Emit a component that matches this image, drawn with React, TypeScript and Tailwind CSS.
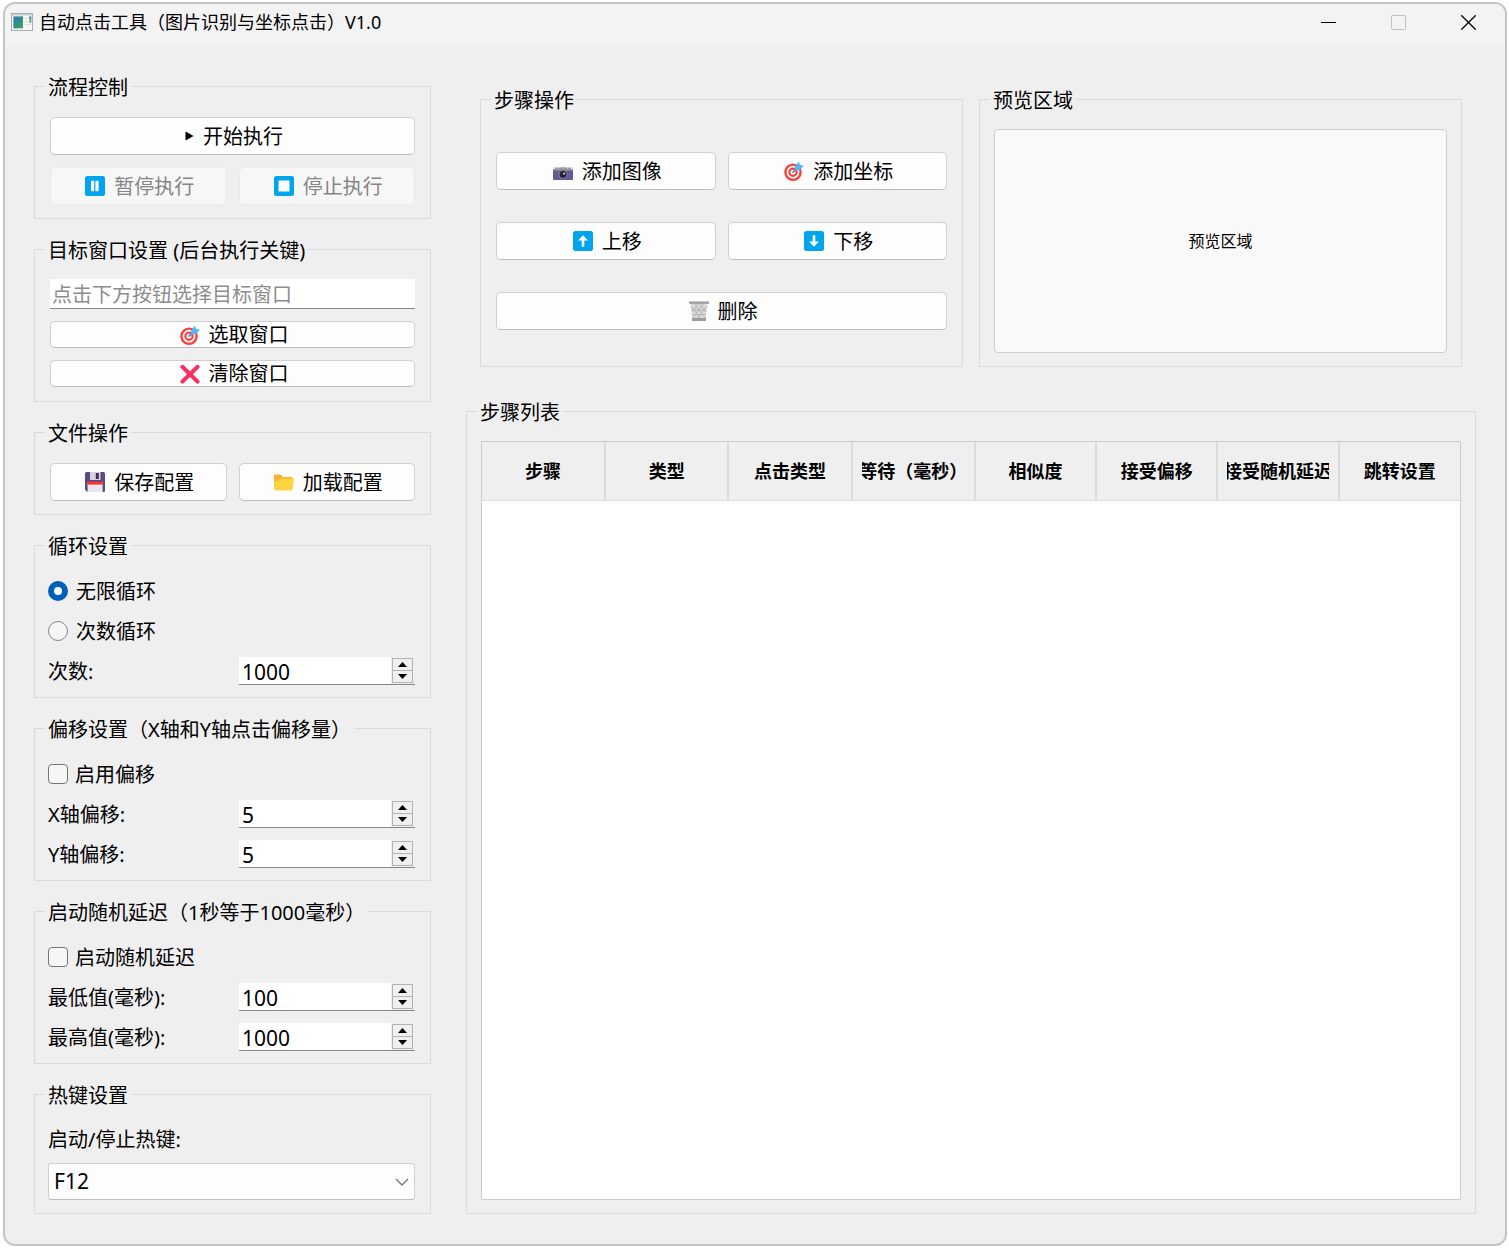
import { useState } from "react";
import type { ReactNode } from "react";
import clsx from "clsx";

const Keycap = ({ children }: { children: ReactNode }) => (
  <svg viewBox="0 0 20 20" className="size-5 shrink-0" aria-hidden="true">
    <rect x="0" y="0" width="20" height="20" rx="2.5" fill="#00a6ed" />
    {children}
  </svg>
);

const PauseIcon = () => (
  <Keycap>
    <rect x="6" y="4.8" width="3.2" height="10.4" fill="#fff" />
    <rect x="10.4" y="4.8" width="3.2" height="10.4" fill="#fff" />
  </Keycap>
);

const StopIcon = () => (
  <Keycap>
    <rect x="4.5" y="4.5" width="11" height="11" rx="0.5" fill="#fff" />
  </Keycap>
);

const UpIcon = () => (
  <Keycap>
    <path d="M10 4.2 15 9.6h-3.7v6.2H8.7V9.6H5z" fill="#fff" />
  </Keycap>
);

const DownIcon = () => (
  <Keycap>
    <path d="M10 15.8 5 10.4h3.7V4.2h2.6v6.2H15z" fill="#fff" />
  </Keycap>
);

const PlayIcon = () => (
  <svg viewBox="0 0 9 10" className="h-[10px] w-[9px] shrink-0" aria-hidden="true">
    <path d="M0.5 0.5 8.5 5 0.5 9.5z" fill="#000" />
  </svg>
);

const TargetIcon = () => (
  <svg viewBox="0 0 20 20" className="size-5 shrink-0" aria-hidden="true">
    <circle cx="9" cy="11.2" r="7.6" fill="#fff" stroke="#f8403c" strokeWidth="2.4" />
    <circle cx="9" cy="11.2" r="3.6" fill="#fff" stroke="#f8403c" strokeWidth="2.2" />
    <path d="M8.6 11.6 14 6.2" stroke="#4a86c8" strokeWidth="1.6" />
    <path d="M11 5.4 15 0.4l.9 3.4 4 1-4.6 4.4-4.3.2z" fill="#50b8fa" />
  </svg>
);

const CrossIcon = () => (
  <svg viewBox="0 0 20 20" className="size-5 shrink-0" aria-hidden="true">
    <path d="M2.4 2.8 17.6 17.6M17.6 2.8 2.4 17.6" stroke="#f92f60" strokeWidth="4" strokeLinecap="round" />
  </svg>
);

const SaveIcon = () => (
  <svg viewBox="0 0 20 20" className="size-5 shrink-0" aria-hidden="true">
    <path d="M0 1.5Q0 0 1.5 0h17Q20 0 20 1.5v17q0 1.5-1.5 1.5h-16L0 17.8z" fill="#5b4a80" />
    <rect x="5" y="0" width="10.5" height="8" fill="#d8d3df" />
    <rect x="10.8" y="1" width="3" height="6" fill="#3c2f5c" />
    <rect x="2.6" y="10" width="15" height="10" fill="#e9e6ec" />
    <rect x="2.6" y="9.6" width="15" height="3" fill="#f8312f" />
  </svg>
);

const FolderIcon = () => (
  <svg viewBox="0 0 20 20" className="size-5 shrink-0" aria-hidden="true">
    <path d="M0 3.6Q0 2.4 1.2 2.4h5.4L9 5h8.2q1.2 0 1.2 1.2V15H0z" fill="#ffb02e" />
    <path d="M0 9.6Q3 9.4 4.6 7.6 5.4 6.6 6.8 6.6h12q1.4 0 1.1 1.4l-1.3 9.2q-.3 1.4-1.6 1.4H2.4Q.6 18.6.4 16.8z" fill="#fcd53f" />
  </svg>
);

const CameraIcon = () => (
  <svg viewBox="0 0 20 20" className="size-5 shrink-0" aria-hidden="true">
    <path d="M1.6 6.6h4v2h-4zM14.4 6.6h4v2h-4z" fill="#9b9b9b" />
    <path d="M6.4 6.2h7.2l.8 2.4H5.6z" fill="#9b9b9b" />
    <rect x="0" y="8" width="20" height="11" rx="1" fill="#635994" />
    <path d="M0 8h20v1.4H0z" fill="#9b9b9b" />
    <circle cx="10" cy="13.4" r="4.6" fill="#8478a8" />
    <circle cx="10" cy="13.4" r="3.4" fill="#2a2236" />
    <circle cx="11" cy="12.6" r="1.1" fill="#cdc4d6" />
  </svg>
);

const TrashIcon = () => (
  <svg viewBox="0 0 20 20" className="size-5 shrink-0" aria-hidden="true">
    <path d="M1.4 2h17.2L16.4 19H3.6z" fill="#dcdcdc" />
    <path
      d="M2 5 12 18M6 3l10 14M11 3l6 8M18 5 8 18M14 3 4 17M9 3 3 11M2.6 9h15M3 13.6h14"
      stroke="#b4b4b4"
      strokeWidth="1"
      fill="none"
    />
    <path d="M0 0.4h20v2.4H0z" fill="#9b9b9b" />
    <path d="M3 17h14v3H3z" fill="#9b9b9b" />
  </svg>
);

const AppIcon = () => (
  <svg viewBox="0 0 22 18" className="h-[18px] w-[22px] shrink-0" aria-hidden="true">
    <defs>
      <linearGradient id="screen" x1="0" y1="0" x2="1" y2="1">
        <stop offset="0" stopColor="#3a72b4" />
        <stop offset="0.5" stopColor="#2f8f86" />
        <stop offset="1" stopColor="#3fb055" />
      </linearGradient>
    </defs>
    <rect x="0.5" y="0.5" width="21" height="17" fill="#f6f6f6" stroke="#a9adb0" />
    <path d="M1 1h20v1.6H1z" fill="#c9ced3" />
    <rect x="2.4" y="3.4" width="9.6" height="12" fill="url(#screen)" />
    <path d="M13.4 5.5h3.4M13.4 8.5h3.4M13.4 11.5h6.4" stroke="#dcdcdc" />
    <rect x="18.2" y="3.4" width="2.2" height="3" fill="#4a86b8" />
    <rect x="18.2" y="6.4" width="2.2" height="3.2" fill="#55b06a" />
  </svg>
);

type GroupProps = { title: string; className?: string; children: ReactNode };

const Group = ({ title, className, children }: GroupProps) => (
  <fieldset className={clsx("min-w-0 border border-[#dadada]", className)}>
    <legend className="ml-[10px] px-[3px] pt-[3px] leading-[23px]">{title}</legend>
    {children}
  </fieldset>
);

type PushButtonProps = {
  icon: ReactNode;
  label: string;
  disabled?: boolean;
  slim?: boolean;
  className?: string;
};

const PushButton = ({ icon, label, disabled, slim, className }: PushButtonProps) => (
  <button
    type="button"
    disabled={disabled}
    className={clsx(
      "flex items-center justify-center gap-[9px] overflow-hidden rounded-[5px] border pl-[3px] leading-6",
      slim ? "h-[27px]" : "h-[38px]",
      disabled
        ? "border-[#eaeaea] bg-[#f7f7f7] text-[#858585]"
        : "border-[#d0d0d0] border-b-[#bcbcbc] bg-[#fdfdfd] hover:bg-[#f5f5f5]",
      className
    )}
  >
    {icon}
    <span className={slim ? "" : "pt-[2px]"}>{label}</span>
  </button>
);

const SpinRow = ({ id, label, initial }: { id: string; label: string; initial: number }) => {
  const [value, setValue] = useState(initial);
  const stepClass = "flex flex-1 items-center justify-center border border-[#b4b4b4] bg-[#f0f0f0]";

  return (
    <div className="flex h-7 items-center justify-between">
      <label htmlFor={id} className="pt-[2px]">
        {label}
      </label>
      <div className="flex h-7 w-[176px] border-b border-[#868686]">
        <input
          id={id}
          type="number"
          value={value}
          onChange={(e) => setValue(Number(e.target.value))}
          className="min-w-0 flex-1 bg-white pt-[2px] pl-[3px] text-[21px] leading-6 outline-none [appearance:textfield] [&::-webkit-inner-spin-button]:appearance-none"
        />
        <div className="my-px mr-[2px] ml-px flex w-[21px] flex-col">
          <button type="button" aria-label="增加" className={stepClass} onClick={() => setValue(value + 1)}>
            <svg viewBox="0 0 9 5" className="h-[5px] w-[9px]">
              <path d="M4.5 0 9 5H0z" />
            </svg>
          </button>
          <button
            type="button"
            aria-label="减少"
            className={clsx(stepClass, "border-t-0")}
            onClick={() => setValue(value - 1)}
          >
            <svg viewBox="0 0 9 5" className="h-[5px] w-[9px]">
              <path d="M4.5 5 0 0h9z" />
            </svg>
          </button>
        </div>
      </div>
    </div>
  );
};

const RadioRow = ({ label, defaultChecked }: { label: string; defaultChecked?: boolean }) => (
  <label className="flex h-7 items-center gap-2">
    <input
      type="radio"
      name="loop"
      defaultChecked={defaultChecked}
      className="size-5 appearance-none rounded-full border border-[#858585] bg-[#f6f6f6] checked:border-[6px] checked:border-[#005fb8] checked:bg-white"
    />
    <span className="pt-[2px]">{label}</span>
  </label>
);

const CheckRow = ({ label }: { label: string }) => (
  <label className="flex h-7 items-center gap-[7px]">
    <input
      type="checkbox"
      className="size-5 appearance-none rounded-[4px] border border-[#767676] bg-[#f6f6f6] checked:border-[#005fb8] checked:bg-[#005fb8]"
    />
    <span className="pt-[2px]">{label}</span>
  </label>
);

const TitleBar = () => (
  <header className="flex h-10 items-center bg-[#f3f3f3] pr-[2px] pb-[4px] pl-[6px] text-[18px]">
    <AppIcon />
    <h1 className="ml-[6px] leading-6">自动点击工具（图片识别与坐标点击）V1.0</h1>
    <div className="ml-auto flex h-full">
      <button type="button" aria-label="最小化" className="flex w-[70px] items-center justify-center">
        <svg viewBox="0 0 15 15" className="size-[15px]">
          <path d="M0 7.5h15" stroke="#000" />
        </svg>
      </button>
      <button type="button" aria-label="最大化" disabled className="flex w-[70px] items-center justify-center">
        <svg viewBox="0 0 15 15" className="size-[15px]">
          <rect x="0.5" y="0.5" width="14" height="14" rx="1" fill="none" stroke="#c0c0c0" />
        </svg>
      </button>
      <button type="button" aria-label="关闭" className="flex w-[70px] items-center justify-center">
        <svg viewBox="0 0 15 15" className="size-[15px]">
          <path d="M0.3 0.3l14.4 14.4M14.7 0.3L0.3 14.7" stroke="#000" strokeWidth="1.3" />
        </svg>
      </button>
    </div>
  </header>
);

const Sidebar = () => (
  <aside className="flex w-[397px] shrink-0 flex-col gap-[17px]">
    <Group title="流程控制">
      <div className="grid grid-cols-2 gap-3 px-[15px] pt-[18px] pb-[13px]">
        <PushButton icon={<PlayIcon />} label="开始执行" className="col-span-2" />
        <PushButton icon={<PauseIcon />} label="暂停执行" disabled />
        <PushButton icon={<StopIcon />} label="停止执行" disabled />
      </div>
    </Group>

    <Group title="目标窗口设置 (后台执行关键)">
      <div className="flex flex-col gap-3 px-[15px] pt-[17px] pb-[14px]">
        <input
          type="text"
          name="target"
          aria-label="目标窗口"
          placeholder="点击下方按钮选择目标窗口"
          className="h-[30px] w-full border-b border-[#868686] bg-white px-[2px] pt-[2px] outline-none placeholder:text-[#8c8c8c]"
        />
        <PushButton icon={<TargetIcon />} label="选取窗口" slim />
        <PushButton icon={<CrossIcon />} label="清除窗口" slim />
      </div>
    </Group>

    <Group title="文件操作">
      <div className="grid grid-cols-2 gap-3 px-[15px] pt-[18px] pb-[13px]">
        <PushButton icon={<SaveIcon />} label="保存配置" />
        <PushButton icon={<FolderIcon />} label="加载配置" />
      </div>
    </Group>

    <Group title="循环设置">
      <div className="flex flex-col gap-3 pt-[19px] pr-[15px] pb-[12px] pl-[13px]">
        <RadioRow label="无限循环" defaultChecked />
        <RadioRow label="次数循环" />
        <SpinRow id="count" label="次数:" initial={1000} />
      </div>
    </Group>

    <Group title="偏移设置（X轴和Y轴点击偏移量）">
      <div className="flex flex-col gap-3 pt-[19px] pr-[15px] pb-[12px] pl-[13px]">
        <CheckRow label="启用偏移" />
        <SpinRow id="offset-x" label="X轴偏移:" initial={5} />
        <SpinRow id="offset-y" label="Y轴偏移:" initial={5} />
      </div>
    </Group>

    <Group title="启动随机延迟（1秒等于1000毫秒）">
      <div className="flex flex-col gap-3 pt-[19px] pr-[15px] pb-[12px] pl-[13px]">
        <CheckRow label="启动随机延迟" />
        <SpinRow id="delay-min" label="最低值(毫秒):" initial={100} />
        <SpinRow id="delay-max" label="最高值(毫秒):" initial={1000} />
      </div>
    </Group>

    <Group title="热键设置">
      <div className="flex flex-col gap-[10px] pt-[18px] pr-[15px] pb-[13px] pl-[13px]">
        <label htmlFor="hotkey" className="pt-[2px] leading-[26px]">
          启动/停止热键:
        </label>
        <div className="relative">
          <select
            id="hotkey"
            defaultValue="F12"
            className="h-[37px] w-full appearance-none rounded-[3px] border border-[#d0d0d0] border-b-[#bcbcbc] bg-[#fdfdfd] px-[5px] text-[21px] outline-none"
          >
            <option>F12</option>
          </select>
          <svg viewBox="0 0 14 8" className="pointer-events-none absolute top-[15px] right-[6px] h-2 w-[14px]">
            <path d="M1 1l6 6 6-6" fill="none" stroke="#767676" strokeWidth="1.4" />
          </svg>
        </div>
      </div>
    </Group>
  </aside>
);

const columns = ["步骤", "类型", "点击类型", "等待（毫秒）", "相似度", "接受偏移", "接受随机延迟", "跳转设置"];

const Workspace = () => (
  <main className="flex min-w-0 flex-1 flex-col gap-[31px] pt-[13px]">
    <div className="mx-[14px] grid grid-cols-2 gap-4">
      <Group title="步骤操作">
        <div className="grid grid-cols-2 gap-x-3 gap-y-8 px-[15px] pt-10 pb-9">
          <PushButton icon={<CameraIcon />} label="添加图像" />
          <PushButton icon={<TargetIcon />} label="添加坐标" />
          <PushButton icon={<UpIcon />} label="上移" />
          <PushButton icon={<DownIcon />} label="下移" />
          <PushButton icon={<TrashIcon />} label="删除" className="col-span-2" />
        </div>
      </Group>

      <Group title="预览区域">
        <div className="mx-[14px] mt-[17px] mb-[13px] flex h-[224px] items-center justify-center rounded-[4px] border border-[#cfcfcf] bg-[#f9f9f9] text-[16px]">
          预览区域
        </div>
      </Group>
    </div>

    <Group title="步骤列表" className="flex flex-1 flex-col">
      <div className="mx-[14px] mt-[17px] mb-[13px] flex-1 border border-[#cccccc] bg-white">
        <table className="w-full table-fixed border-collapse bg-[#efefef] text-[18px]">
          <thead>
            <tr>
              {columns.map((name, i) => (
                <th
                  key={name}
                  className={clsx(
                    "h-[58px] border-r-2 border-b border-[#dcdcdc] px-[9px] font-bold last:border-r-0",
                    i < 4 && "w-[12.6%]"
                  )}
                >
                  <div className="flex justify-center overflow-hidden leading-6 whitespace-nowrap">{name}</div>
                </th>
              ))}
            </tr>
          </thead>
        </table>
      </div>
    </Group>
  </main>
);

const App = () => {
  return (
    <div className="flex min-h-screen flex-col bg-white pt-[2px] pr-[2px] pb-[3px] pl-[3px] font-['Noto_Sans','Noto_Sans_CJK_SC',sans-serif] text-[20px] text-black">
      <div className="flex flex-1 flex-col overflow-hidden rounded-[12px] border-2 border-[#c4c4c4] bg-[#efefef]">
        <TitleBar />
        <div className="flex flex-1 gap-[35px] pt-[29px] pr-[29px] pb-[30px] pl-[29px]">
          <Sidebar />
          <Workspace />
        </div>
      </div>
    </div>
  );
};

export default App;
